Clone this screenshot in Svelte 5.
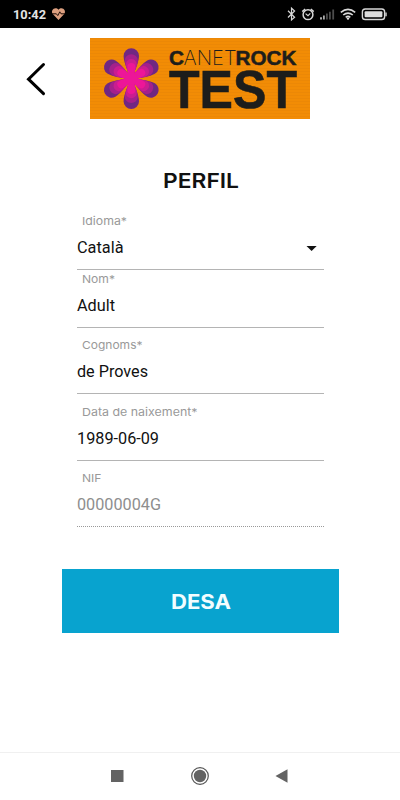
<script>
  const fields = [
    { label: 'Idioma*', value: 'Català', h: 62, lw: 45, vw: 46.5, select: true },
    { label: 'Nom*', value: 'Adult', h: 58, lw: 33, vw: 38 },
    { label: 'Cognoms*', value: 'de Proves', h: 66, lw: 60.5, vw: 71 },
    { label: 'Data de naixement*', value: '1989-06-09', h: 67, lw: 115.5, vw: 82 },
    { label: 'NIF', value: '00000004G', h: 66, lw: 19.5, vw: 84, disabled: true }
  ];
  const petals = [0, 60, 120, 180, 240, 300];
  const layers = [
    { fill: '#702782', d: 'M-2.5 -4 C-4 -11 -7.7 -16 -7.7 -22.8 A7.7 7.6 0 0 1 7.7 -22.8 C7.7 -16 4 -11 2.5 -4Z' },
    { fill: '#a4208b', d: 'M-2.5 -4 C-3.6 -9 -6.5 -13 -6.5 -18.2 A6.5 6.2 0 0 1 6.5 -18.2 C6.5 -13 3.6 -9 2.5 -4Z' },
    { fill: '#ca1d90', d: 'M-2.5 -4 C-3.4 -8 -5.3 -11 -5.3 -14.6 A5.3 5 0 0 1 5.3 -14.6 C5.3 -11 3.4 -8 2.5 -4Z' },
    { fill: '#ed1698', d: 'M-3 -2 C-3 -6 -4 -9 -4 -11.5 A4 4 0 0 1 4 -11.5 C4 -9 3 -6 3 -2Z' }
  ];
</script>

<div class="screen">
  <div class="status">
    <svg width="400" height="28" viewBox="0 0 400 28">
      <text x="13" y="19" class="clock" textLength="33" lengthAdjust="spacingAndGlyphs">10:42</text>
      <path d="M58.5 20 L53 14.3 C49.8 10.5 55.1 5.8 58.5 9.8 C61.9 5.8 67.2 10.5 64 14.3Z" fill="#dda080" />
      <path d="M52 13.8H56.4L57.8 15.6L59.8 11.8L61 13.8H65" fill="none" stroke="#241009" />
      <g fill="none" stroke="#d8d8d8" stroke-width="1.2">
        <path d="M288 10.7L294.6 17.2L291.5 20V8.2L294.6 11L288 17.5" />
        <circle cx="308" cy="14.7" r="4.9" stroke-width="1.5" />
        <path d="M302.3 11.6L305.2 9M313.7 11.6L310.8 9" stroke-width="1.5" />
        <path d="M305.6 13.6L308 15.6L310.3 13.4" />
        <path d="M340.8 12.4Q348 6.4 355.2 12.4M343.2 15Q348 11.1 352.8 15M345.7 17.3Q348 15.5 350.3 17.3" stroke-width="1.6" />
        <rect x="362.4" y="9" width="22.2" height="10.5" rx="2.8" stroke-width="1.4" />
      </g>
      <circle cx="348" cy="18.6" r="1.2" fill="#ddd" />
      <rect x="364.6" y="11.2" width="17.8" height="6.1" rx="1" fill="#ddd" />
      <path d="M386 12.4v3.8" stroke="#ccc" stroke-width="1.5" />
      <path d="M320 19.5v-2.2h2v2.2zM323 19.5v-4h1.8v4z" fill="#aaa" />
      <path d="M326 19.5v-6h1.8v6zM329 19.5v-7.8h1.8v7.8zM332.3 19.5v-10h1.8v10z" fill="#4c4c4c" />
    </svg>
  </div>

  <header>
    <svg class="back" width="24" height="36" viewBox="0 0 24 36">
      <path d="M18.5 3.5L3.5 18.2L18.5 32.7" fill="none" stroke="#000" stroke-width="3" stroke-linecap="round" />
    </svg>
    <svg class="logo" width="220" height="81" viewBox="0 0 220 81">
      <defs>
        <pattern id="lines" width="220" height="3" patternUnits="userSpaceOnUse">
          <rect width="220" height="3" fill="#f28c05" />
          <rect width="220" height="1" fill="#ec8806" />
        </pattern>
      </defs>
      <rect width="220" height="81" fill="url(#lines)" />
      <g transform="translate(41.3 40.6)">
        {#each layers as layer}
          {#each petals as a}
            <path d={layer.d} fill={layer.fill} transform="rotate({a})" />
          {/each}
        {/each}
        <circle r="6" fill="#ed1698" />
      </g>
      <g fill="#1d1d1b">
        <text x="79" y="26.5" class="heavy" textLength="15" lengthAdjust="spacingAndGlyphs">C</text>
        <text x="93.5" y="26.5" class="light" textLength="53" lengthAdjust="spacingAndGlyphs">ANET</text>
        <text x="145.5" y="26.5" class="heavy" textLength="61" lengthAdjust="spacingAndGlyphs">ROCK</text>
        <text x="79" y="69.8" class="test" textLength="128" lengthAdjust="spacingAndGlyphs">TEST</text>
      </g>
    </svg>
  </header>

  <h1>
    <svg width="78" height="28" viewBox="0 0 78 28">
      <text x="1" y="21" textLength="76" lengthAdjust="spacingAndGlyphs">PERFIL</text>
    </svg>
  </h1>

  <main>
    {#each fields as f}
      <div class="field" class:disabled={f.disabled} style="height: {f.h}px">
        <svg width="247" height="57" viewBox="0 0 247 57">
          <text class="label" x="5" y="12.6" textLength={f.lw} lengthAdjust="spacingAndGlyphs">{f.label}</text>
          <text class="value" x="0" y="41.3" textLength={f.vw} lengthAdjust="spacingAndGlyphs">{f.value}</text>
          {#if f.select}
            <path d="M229.5 34h10.2l-5.1 5z" fill="#111" />
          {/if}
        </svg>
      </div>
    {/each}
  </main>

  <button>
    <svg width="62" height="28" viewBox="0 0 62 28">
      <text x="1" y="21.5" textLength="60" lengthAdjust="spacingAndGlyphs">DESA</text>
    </svg>
  </button>

  <nav>
    <svg width="400" height="47" viewBox="0 0 400 47">
      <rect x="111" y="17" width="12.5" height="12" fill="#636363" />
      <circle cx="200" cy="23" r="8.3" fill="none" stroke="#555" stroke-width="1.2" />
      <circle cx="200" cy="23" r="6.2" fill="#636363" />
      <path d="M275.5 23L287.5 16.3V29.8Z" fill="#636363" />
    </svg>
  </nav>
</div>

<style>
  .screen {
    width: 400px;
    height: 800px;
    background: #fff;
    display: flex;
    flex-direction: column;
    font-family: Roboto, sans-serif;
    overflow: hidden;
  }
  svg { display: block; overflow: visible; }
  .status { height: 28px; background: #000; flex: none; }
  .clock { font: 700 13px Roboto, sans-serif; fill: #e4e4e4; }
  header {
    display: flex;
    align-items: flex-start;
    padding: 10px 0 0 25px;
    height: 81px;
  }
  .back { margin: 23px 41px 0 0; }
  .heavy { font: 700 21px "Liberation Sans", sans-serif; stroke: #1d1d1b; stroke-width: 0.5; }
  .light { font: 200 20.6px Inter, sans-serif; }
  .test { font: 700 53.5px "Liberation Sans", sans-serif; stroke: #1d1d1b; stroke-width: 0.6; }
  h1 {
    margin: 48px 0 0 1px;
    height: 28px;
    display: flex;
    justify-content: center;
  }
  h1 text { font: 600 20.3px Inter, sans-serif; fill: #111; }
  main { width: 247px; margin: 13px 0 0 77px; }
  .field {
    box-sizing: border-box;
    display: flex;
    align-items: flex-end;
    border-bottom: 1px solid #b4b4b4;
  }
  .field.disabled { border-bottom: 1px dotted #999; }
  .label { font: 400 11px Inter, sans-serif; fill: #999; }
  .value { font: 400 16px Roboto, sans-serif; fill: #111; }
  .disabled .value { fill: #8e8e8e; }
  button {
    margin: 42px 0 0 61.5px;
    padding: 0 0 0 1px;
    width: 277px;
    height: 64px;
    border: 0;
    background: #08a3cf;
    display: flex;
    align-items: center;
    justify-content: center;
  }
  button text { font: 700 20px Inter, sans-serif; fill: #f2fdff; }
  nav { margin-top: auto; height: 47px; border-top: 1px solid #f0f0f0; }
</style>
